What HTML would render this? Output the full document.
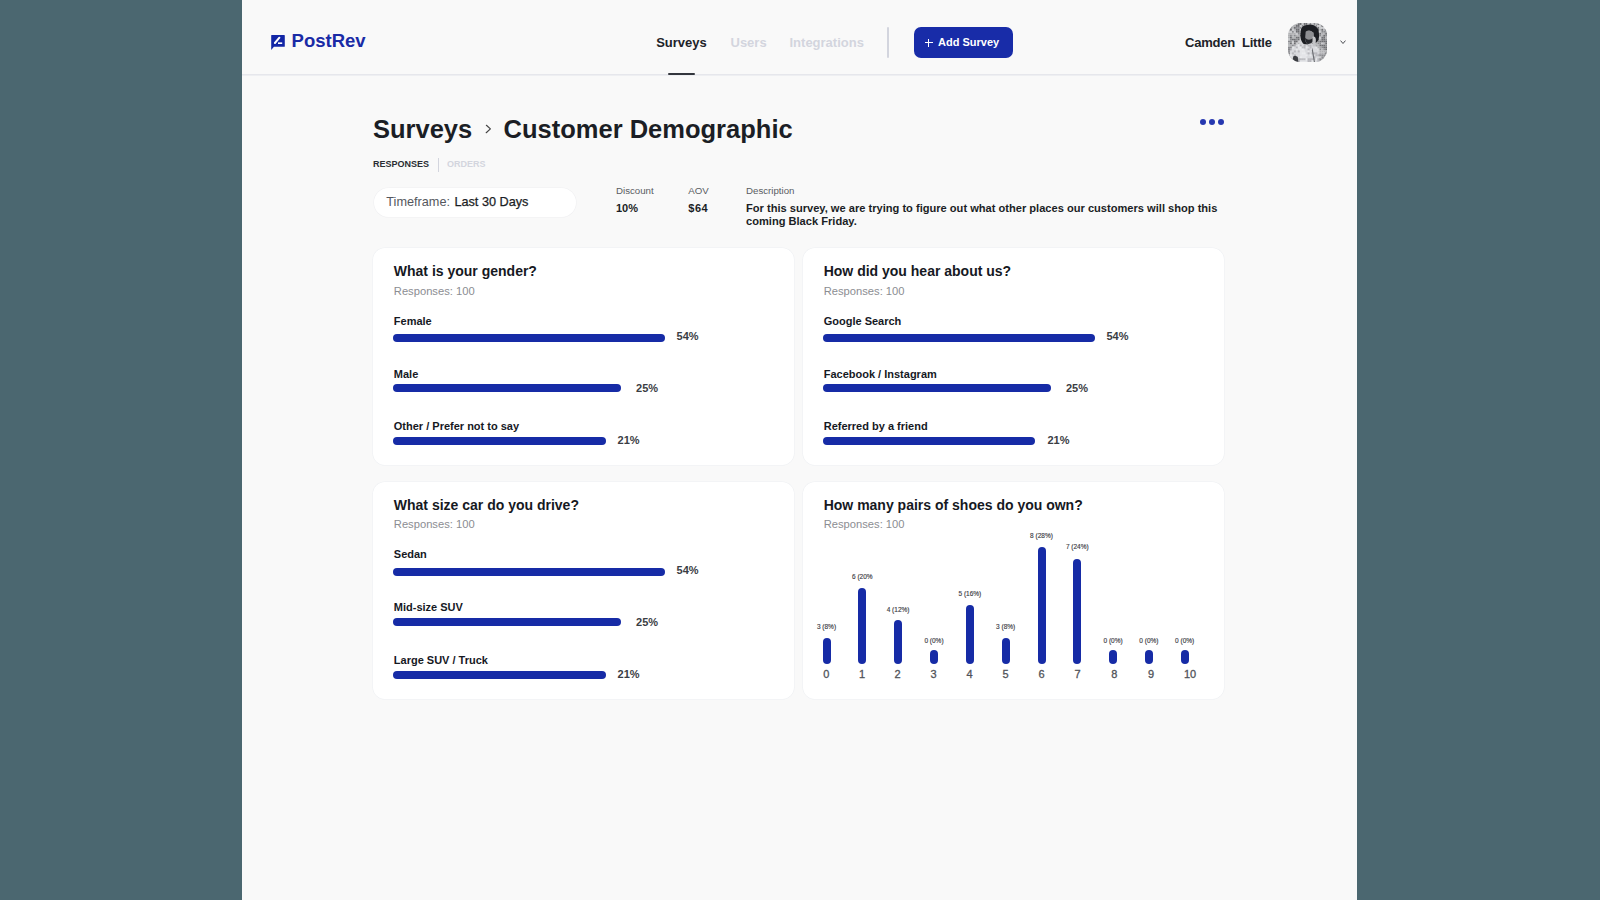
<!DOCTYPE html>
<html><head><meta charset="utf-8"><title>PostRev - Customer Demographic</title>
<style>
html,body{margin:0;padding:0;width:1600px;height:900px;overflow:hidden;background:#f9f9f9}
body{position:relative;font-family:"Liberation Sans",sans-serif}
.t{position:absolute;line-height:1;white-space:nowrap}
.c{text-align:center}
</style></head><body>
<div style="position:absolute;left:0.00px;top:0.00px;width:242.00px;height:900.00px;background:#4b6770"></div>
<div style="position:absolute;left:1357.00px;top:0.00px;width:243.00px;height:900.00px;background:#4b6770"></div>
<div style="position:absolute;left:242.00px;top:0.00px;width:1115.00px;height:900.00px;background:#f9f9f9"></div>
<div style="position:absolute;left:242.00px;top:74.00px;width:1115.00px;height:1.00px;background:#e6e7ec"></div>
<div style="position:absolute;left:242.00px;top:75.00px;width:1115.00px;height:1.00px;background:#eeeff2"></div>
<svg style="position:absolute;left:271.3px;top:34.6px" width="14" height="15.2" viewBox="0 0 14 15.2"><path d="M0.6 0 H13.2 Q13.8 0 13.8 0.6 V11.2 Q13.8 11.8 13.2 11.8 H2.9 L0.2 15 V0.6 Q0.2 0 0.6 0 Z" fill="#1226a6"/><path d="M3.9 8.0 L8.4 2.7" stroke="#fff" stroke-width="2.0" stroke-linecap="round"/><rect x="7.0" y="7.4" width="4.2" height="1.6" fill="#fff"/></svg>
<div class="t " style="left:291.60px;top:31.54px;font-size:18.5px;font-weight:700;color:#1a2ba6;">PostRev</div>
<div class="t " style="left:656.20px;top:36.29px;font-size:13px;font-weight:700;color:#202228;">Surveys</div>
<div style="position:absolute;left:668.00px;top:73.00px;width:27.00px;height:2.00px;background:#33363d;border-radius:1px"></div>
<div class="t " style="left:730.50px;top:36.29px;font-size:13px;font-weight:700;color:#d3d5de;">Users</div>
<div class="t " style="left:789.50px;top:36.29px;font-size:13px;font-weight:700;color:#d3d5de;">Integrations</div>
<div style="position:absolute;left:887.40px;top:27.30px;width:1.60px;height:30.40px;background:#d3d5de;border-radius:1px"></div>
<div style="position:absolute;left:914.00px;top:27.30px;width:99.40px;height:30.30px;background:#182ca8;border-radius:7px"></div>
<div style="position:absolute;left:924.90px;top:42.20px;width:8.00px;height:1.10px;background:#fff"></div>
<div style="position:absolute;left:928.35px;top:38.75px;width:1.10px;height:8.00px;background:#fff"></div>
<div class="t " style="left:938.00px;top:37.29px;font-size:11px;font-weight:700;color:#ffffff;">Add Survey</div>
<div class="t " style="left:1185.00px;top:36.09px;font-size:13px;font-weight:700;color:#202228;letter-spacing:-0.2px">Camden&nbsp; Little</div>
<svg style="position:absolute;left:1288px;top:23px" width="39.2" height="39.2" viewBox="0 0 40 40">
<defs><clipPath id="av"><rect width="40" height="40" rx="13"/></clipPath></defs>
<g clip-path="url(#av)">
<rect x="0" y="0" width="2" height="2" fill="#6d6e72"/><rect x="2" y="0" width="2" height="2" fill="#8a8b8f"/><rect x="4" y="0" width="2" height="2" fill="#8a8b8f"/><rect x="6" y="0" width="2" height="2" fill="#b0b1b4"/><rect x="8" y="0" width="2" height="2" fill="#b0b1b4"/><rect x="10" y="0" width="2" height="2" fill="#6d6e72"/><rect x="12" y="0" width="2" height="2" fill="#6d6e72"/><rect x="14" y="0" width="2" height="2" fill="#c9cacd"/><rect x="16" y="0" width="2" height="2" fill="#6d6e72"/><rect x="18" y="0" width="2" height="2" fill="#6d6e72"/><rect x="20" y="0" width="2" height="2" fill="#c9cacd"/><rect x="22" y="0" width="2" height="2" fill="#8a8b8f"/><rect x="24" y="0" width="2" height="2" fill="#c9cacd"/><rect x="26" y="0" width="2" height="2" fill="#8a8b8f"/><rect x="28" y="0" width="2" height="2" fill="#b0b1b4"/><rect x="30" y="0" width="2" height="2" fill="#6d6e72"/><rect x="32" y="0" width="2" height="2" fill="#b0b1b4"/><rect x="34" y="0" width="2" height="2" fill="#c9cacd"/><rect x="36" y="0" width="2" height="2" fill="#8a8b8f"/><rect x="38" y="0" width="2" height="2" fill="#b0b1b4"/><rect x="0" y="2" width="2" height="2" fill="#b0b1b4"/><rect x="2" y="2" width="2" height="2" fill="#6d6e72"/><rect x="4" y="2" width="2" height="2" fill="#b0b1b4"/><rect x="6" y="2" width="2" height="2" fill="#b0b1b4"/><rect x="8" y="2" width="2" height="2" fill="#6d6e72"/><rect x="10" y="2" width="2" height="2" fill="#6d6e72"/><rect x="12" y="2" width="2" height="2" fill="#c9cacd"/><rect x="14" y="2" width="2" height="2" fill="#8a8b8f"/><rect x="16" y="2" width="2" height="2" fill="#b0b1b4"/><rect x="18" y="2" width="2" height="2" fill="#c9cacd"/><rect x="20" y="2" width="2" height="2" fill="#b0b1b4"/><rect x="22" y="2" width="2" height="2" fill="#c9cacd"/><rect x="24" y="2" width="2" height="2" fill="#8a8b8f"/><rect x="26" y="2" width="2" height="2" fill="#c9cacd"/><rect x="28" y="2" width="2" height="2" fill="#8a8b8f"/><rect x="30" y="2" width="2" height="2" fill="#c9cacd"/><rect x="32" y="2" width="2" height="2" fill="#c9cacd"/><rect x="34" y="2" width="2" height="2" fill="#6d6e72"/><rect x="36" y="2" width="2" height="2" fill="#6d6e72"/><rect x="38" y="2" width="2" height="2" fill="#6d6e72"/><rect x="0" y="4" width="2" height="2" fill="#c9cacd"/><rect x="2" y="4" width="2" height="2" fill="#8a8b8f"/><rect x="4" y="4" width="2" height="2" fill="#b0b1b4"/><rect x="6" y="4" width="2" height="2" fill="#6d6e72"/><rect x="8" y="4" width="2" height="2" fill="#8a8b8f"/><rect x="10" y="4" width="2" height="2" fill="#8a8b8f"/><rect x="12" y="4" width="2" height="2" fill="#8a8b8f"/><rect x="14" y="4" width="2" height="2" fill="#b0b1b4"/><rect x="16" y="4" width="2" height="2" fill="#b0b1b4"/><rect x="18" y="4" width="2" height="2" fill="#c9cacd"/><rect x="20" y="4" width="2" height="2" fill="#b0b1b4"/><rect x="22" y="4" width="2" height="2" fill="#c9cacd"/><rect x="24" y="4" width="2" height="2" fill="#c9cacd"/><rect x="26" y="4" width="2" height="2" fill="#c9cacd"/><rect x="28" y="4" width="2" height="2" fill="#b0b1b4"/><rect x="30" y="4" width="2" height="2" fill="#6d6e72"/><rect x="32" y="4" width="2" height="2" fill="#c9cacd"/><rect x="34" y="4" width="2" height="2" fill="#c9cacd"/><rect x="36" y="4" width="2" height="2" fill="#c9cacd"/><rect x="38" y="4" width="2" height="2" fill="#b0b1b4"/><rect x="0" y="6" width="2" height="2" fill="#b0b1b4"/><rect x="2" y="6" width="2" height="2" fill="#6d6e72"/><rect x="4" y="6" width="2" height="2" fill="#c9cacd"/><rect x="6" y="6" width="2" height="2" fill="#b0b1b4"/><rect x="8" y="6" width="2" height="2" fill="#6d6e72"/><rect x="10" y="6" width="2" height="2" fill="#6d6e72"/><rect x="12" y="6" width="2" height="2" fill="#c9cacd"/><rect x="14" y="6" width="2" height="2" fill="#c9cacd"/><rect x="16" y="6" width="2" height="2" fill="#6d6e72"/><rect x="18" y="6" width="2" height="2" fill="#c9cacd"/><rect x="20" y="6" width="2" height="2" fill="#8a8b8f"/><rect x="22" y="6" width="2" height="2" fill="#6d6e72"/><rect x="24" y="6" width="2" height="2" fill="#6d6e72"/><rect x="26" y="6" width="2" height="2" fill="#b0b1b4"/><rect x="28" y="6" width="2" height="2" fill="#c9cacd"/><rect x="30" y="6" width="2" height="2" fill="#6d6e72"/><rect x="32" y="6" width="2" height="2" fill="#b0b1b4"/><rect x="34" y="6" width="2" height="2" fill="#6d6e72"/><rect x="36" y="6" width="2" height="2" fill="#b0b1b4"/><rect x="38" y="6" width="2" height="2" fill="#6d6e72"/><rect x="0" y="8" width="2" height="2" fill="#c9cacd"/><rect x="2" y="8" width="2" height="2" fill="#c9cacd"/><rect x="4" y="8" width="2" height="2" fill="#8a8b8f"/><rect x="6" y="8" width="2" height="2" fill="#c9cacd"/><rect x="8" y="8" width="2" height="2" fill="#6d6e72"/><rect x="10" y="8" width="2" height="2" fill="#6d6e72"/><rect x="12" y="8" width="2" height="2" fill="#b0b1b4"/><rect x="14" y="8" width="2" height="2" fill="#6d6e72"/><rect x="16" y="8" width="2" height="2" fill="#6d6e72"/><rect x="18" y="8" width="2" height="2" fill="#8a8b8f"/><rect x="20" y="8" width="2" height="2" fill="#b0b1b4"/><rect x="22" y="8" width="2" height="2" fill="#6d6e72"/><rect x="24" y="8" width="2" height="2" fill="#6d6e72"/><rect x="26" y="8" width="2" height="2" fill="#c9cacd"/><rect x="28" y="8" width="2" height="2" fill="#6d6e72"/><rect x="30" y="8" width="2" height="2" fill="#c9cacd"/><rect x="32" y="8" width="2" height="2" fill="#c9cacd"/><rect x="34" y="8" width="2" height="2" fill="#8a8b8f"/><rect x="36" y="8" width="2" height="2" fill="#8a8b8f"/><rect x="38" y="8" width="2" height="2" fill="#8a8b8f"/><rect x="0" y="10" width="2" height="2" fill="#b0b1b4"/><rect x="2" y="10" width="2" height="2" fill="#b0b1b4"/><rect x="4" y="10" width="2" height="2" fill="#b0b1b4"/><rect x="6" y="10" width="2" height="2" fill="#b0b1b4"/><rect x="8" y="10" width="2" height="2" fill="#c9cacd"/><rect x="10" y="10" width="2" height="2" fill="#8a8b8f"/><rect x="12" y="10" width="2" height="2" fill="#8a8b8f"/><rect x="14" y="10" width="2" height="2" fill="#b0b1b4"/><rect x="16" y="10" width="2" height="2" fill="#6d6e72"/><rect x="18" y="10" width="2" height="2" fill="#6d6e72"/><rect x="20" y="10" width="2" height="2" fill="#c9cacd"/><rect x="22" y="10" width="2" height="2" fill="#8a8b8f"/><rect x="24" y="10" width="2" height="2" fill="#8a8b8f"/><rect x="26" y="10" width="2" height="2" fill="#6d6e72"/><rect x="28" y="10" width="2" height="2" fill="#8a8b8f"/><rect x="30" y="10" width="2" height="2" fill="#b0b1b4"/><rect x="32" y="10" width="2" height="2" fill="#6d6e72"/><rect x="34" y="10" width="2" height="2" fill="#b0b1b4"/><rect x="36" y="10" width="2" height="2" fill="#b0b1b4"/><rect x="38" y="10" width="2" height="2" fill="#6d6e72"/><rect x="0" y="12" width="2" height="2" fill="#b0b1b4"/><rect x="2" y="12" width="2" height="2" fill="#8a8b8f"/><rect x="4" y="12" width="2" height="2" fill="#b0b1b4"/><rect x="6" y="12" width="2" height="2" fill="#8a8b8f"/><rect x="8" y="12" width="2" height="2" fill="#b0b1b4"/><rect x="10" y="12" width="2" height="2" fill="#b0b1b4"/><rect x="12" y="12" width="2" height="2" fill="#6d6e72"/><rect x="14" y="12" width="2" height="2" fill="#6d6e72"/><rect x="16" y="12" width="2" height="2" fill="#b0b1b4"/><rect x="18" y="12" width="2" height="2" fill="#c9cacd"/><rect x="20" y="12" width="2" height="2" fill="#6d6e72"/><rect x="22" y="12" width="2" height="2" fill="#8a8b8f"/><rect x="24" y="12" width="2" height="2" fill="#b0b1b4"/><rect x="26" y="12" width="2" height="2" fill="#6d6e72"/><rect x="28" y="12" width="2" height="2" fill="#8a8b8f"/><rect x="30" y="12" width="2" height="2" fill="#6d6e72"/><rect x="32" y="12" width="2" height="2" fill="#8a8b8f"/><rect x="34" y="12" width="2" height="2" fill="#b0b1b4"/><rect x="36" y="12" width="2" height="2" fill="#6d6e72"/><rect x="38" y="12" width="2" height="2" fill="#8a8b8f"/><rect x="0" y="14" width="2" height="2" fill="#b0b1b4"/><rect x="2" y="14" width="2" height="2" fill="#6d6e72"/><rect x="4" y="14" width="2" height="2" fill="#b0b1b4"/><rect x="6" y="14" width="2" height="2" fill="#b0b1b4"/><rect x="8" y="14" width="2" height="2" fill="#6d6e72"/><rect x="10" y="14" width="2" height="2" fill="#6d6e72"/><rect x="12" y="14" width="2" height="2" fill="#c9cacd"/><rect x="14" y="14" width="2" height="2" fill="#6d6e72"/><rect x="16" y="14" width="2" height="2" fill="#6d6e72"/><rect x="18" y="14" width="2" height="2" fill="#8a8b8f"/><rect x="20" y="14" width="2" height="2" fill="#b0b1b4"/><rect x="22" y="14" width="2" height="2" fill="#6d6e72"/><rect x="24" y="14" width="2" height="2" fill="#6d6e72"/><rect x="26" y="14" width="2" height="2" fill="#6d6e72"/><rect x="28" y="14" width="2" height="2" fill="#c9cacd"/><rect x="30" y="14" width="2" height="2" fill="#8a8b8f"/><rect x="32" y="14" width="2" height="2" fill="#c9cacd"/><rect x="34" y="14" width="2" height="2" fill="#6d6e72"/><rect x="36" y="14" width="2" height="2" fill="#6d6e72"/><rect x="38" y="14" width="2" height="2" fill="#b0b1b4"/><rect x="0" y="16" width="2" height="2" fill="#c9cacd"/><rect x="2" y="16" width="2" height="2" fill="#8a8b8f"/><rect x="4" y="16" width="2" height="2" fill="#6d6e72"/><rect x="6" y="16" width="2" height="2" fill="#6d6e72"/><rect x="8" y="16" width="2" height="2" fill="#8a8b8f"/><rect x="10" y="16" width="2" height="2" fill="#6d6e72"/><rect x="12" y="16" width="2" height="2" fill="#c9cacd"/><rect x="14" y="16" width="2" height="2" fill="#c9cacd"/><rect x="16" y="16" width="2" height="2" fill="#6d6e72"/><rect x="18" y="16" width="2" height="2" fill="#6d6e72"/><rect x="20" y="16" width="2" height="2" fill="#c9cacd"/><rect x="22" y="16" width="2" height="2" fill="#b0b1b4"/><rect x="24" y="16" width="2" height="2" fill="#c9cacd"/><rect x="26" y="16" width="2" height="2" fill="#6d6e72"/><rect x="28" y="16" width="2" height="2" fill="#6d6e72"/><rect x="30" y="16" width="2" height="2" fill="#6d6e72"/><rect x="32" y="16" width="2" height="2" fill="#b0b1b4"/><rect x="34" y="16" width="2" height="2" fill="#6d6e72"/><rect x="36" y="16" width="2" height="2" fill="#6d6e72"/><rect x="38" y="16" width="2" height="2" fill="#8a8b8f"/><rect x="0" y="18" width="2" height="2" fill="#8a8b8f"/><rect x="2" y="18" width="2" height="2" fill="#8a8b8f"/><rect x="4" y="18" width="2" height="2" fill="#c9cacd"/><rect x="6" y="18" width="2" height="2" fill="#6d6e72"/><rect x="8" y="18" width="2" height="2" fill="#6d6e72"/><rect x="10" y="18" width="2" height="2" fill="#c9cacd"/><rect x="12" y="18" width="2" height="2" fill="#c9cacd"/><rect x="14" y="18" width="2" height="2" fill="#c9cacd"/><rect x="16" y="18" width="2" height="2" fill="#8a8b8f"/><rect x="18" y="18" width="2" height="2" fill="#c9cacd"/><rect x="20" y="18" width="2" height="2" fill="#c9cacd"/><rect x="22" y="18" width="2" height="2" fill="#6d6e72"/><rect x="24" y="18" width="2" height="2" fill="#b0b1b4"/><rect x="26" y="18" width="2" height="2" fill="#c9cacd"/><rect x="28" y="18" width="2" height="2" fill="#b0b1b4"/><rect x="30" y="18" width="2" height="2" fill="#8a8b8f"/><rect x="32" y="18" width="2" height="2" fill="#6d6e72"/><rect x="34" y="18" width="2" height="2" fill="#6d6e72"/><rect x="36" y="18" width="2" height="2" fill="#6d6e72"/><rect x="38" y="18" width="2" height="2" fill="#6d6e72"/><rect x="0" y="20" width="2" height="2" fill="#b0b1b4"/><rect x="2" y="20" width="2" height="2" fill="#6d6e72"/><rect x="4" y="20" width="2" height="2" fill="#c9cacd"/><rect x="6" y="20" width="2" height="2" fill="#6d6e72"/><rect x="8" y="20" width="2" height="2" fill="#c9cacd"/><rect x="10" y="20" width="2" height="2" fill="#b0b1b4"/><rect x="12" y="20" width="2" height="2" fill="#c9cacd"/><rect x="14" y="20" width="2" height="2" fill="#c9cacd"/><rect x="16" y="20" width="2" height="2" fill="#c9cacd"/><rect x="18" y="20" width="2" height="2" fill="#b0b1b4"/><rect x="20" y="20" width="2" height="2" fill="#6d6e72"/><rect x="22" y="20" width="2" height="2" fill="#b0b1b4"/><rect x="24" y="20" width="2" height="2" fill="#6d6e72"/><rect x="26" y="20" width="2" height="2" fill="#6d6e72"/><rect x="28" y="20" width="2" height="2" fill="#b0b1b4"/><rect x="30" y="20" width="2" height="2" fill="#8a8b8f"/><rect x="32" y="20" width="2" height="2" fill="#8a8b8f"/><rect x="34" y="20" width="2" height="2" fill="#c9cacd"/><rect x="36" y="20" width="2" height="2" fill="#b0b1b4"/><rect x="38" y="20" width="2" height="2" fill="#6d6e72"/><rect x="0" y="22" width="2" height="2" fill="#6d6e72"/><rect x="2" y="22" width="2" height="2" fill="#c9cacd"/><rect x="4" y="22" width="2" height="2" fill="#8a8b8f"/><rect x="6" y="22" width="2" height="2" fill="#b0b1b4"/><rect x="8" y="22" width="2" height="2" fill="#8a8b8f"/><rect x="10" y="22" width="2" height="2" fill="#6d6e72"/><rect x="12" y="22" width="2" height="2" fill="#8a8b8f"/><rect x="14" y="22" width="2" height="2" fill="#c9cacd"/><rect x="16" y="22" width="2" height="2" fill="#6d6e72"/><rect x="18" y="22" width="2" height="2" fill="#b0b1b4"/><rect x="20" y="22" width="2" height="2" fill="#c9cacd"/><rect x="22" y="22" width="2" height="2" fill="#c9cacd"/><rect x="24" y="22" width="2" height="2" fill="#c9cacd"/><rect x="26" y="22" width="2" height="2" fill="#6d6e72"/><rect x="28" y="22" width="2" height="2" fill="#b0b1b4"/><rect x="30" y="22" width="2" height="2" fill="#c9cacd"/><rect x="32" y="22" width="2" height="2" fill="#6d6e72"/><rect x="34" y="22" width="2" height="2" fill="#6d6e72"/><rect x="36" y="22" width="2" height="2" fill="#6d6e72"/><rect x="38" y="22" width="2" height="2" fill="#8a8b8f"/><rect x="0" y="24" width="2" height="2" fill="#8a8b8f"/><rect x="2" y="24" width="2" height="2" fill="#8a8b8f"/><rect x="4" y="24" width="2" height="2" fill="#b0b1b4"/><rect x="6" y="24" width="2" height="2" fill="#6d6e72"/><rect x="8" y="24" width="2" height="2" fill="#6d6e72"/><rect x="10" y="24" width="2" height="2" fill="#6d6e72"/><rect x="12" y="24" width="2" height="2" fill="#6d6e72"/><rect x="14" y="24" width="2" height="2" fill="#6d6e72"/><rect x="16" y="24" width="2" height="2" fill="#c9cacd"/><rect x="18" y="24" width="2" height="2" fill="#c9cacd"/><rect x="20" y="24" width="2" height="2" fill="#6d6e72"/><rect x="22" y="24" width="2" height="2" fill="#8a8b8f"/><rect x="24" y="24" width="2" height="2" fill="#6d6e72"/><rect x="26" y="24" width="2" height="2" fill="#6d6e72"/><rect x="28" y="24" width="2" height="2" fill="#8a8b8f"/><rect x="30" y="24" width="2" height="2" fill="#b0b1b4"/><rect x="32" y="24" width="2" height="2" fill="#b0b1b4"/><rect x="34" y="24" width="2" height="2" fill="#8a8b8f"/><rect x="36" y="24" width="2" height="2" fill="#6d6e72"/><rect x="38" y="24" width="2" height="2" fill="#6d6e72"/><rect x="0" y="26" width="2" height="2" fill="#6d6e72"/><rect x="2" y="26" width="2" height="2" fill="#b0b1b4"/><rect x="4" y="26" width="2" height="2" fill="#b0b1b4"/><rect x="6" y="26" width="2" height="2" fill="#8a8b8f"/><rect x="8" y="26" width="2" height="2" fill="#6d6e72"/><rect x="10" y="26" width="2" height="2" fill="#6d6e72"/><rect x="12" y="26" width="2" height="2" fill="#8a8b8f"/><rect x="14" y="26" width="2" height="2" fill="#b0b1b4"/><rect x="16" y="26" width="2" height="2" fill="#b0b1b4"/><rect x="18" y="26" width="2" height="2" fill="#8a8b8f"/><rect x="20" y="26" width="2" height="2" fill="#c9cacd"/><rect x="22" y="26" width="2" height="2" fill="#b0b1b4"/><rect x="24" y="26" width="2" height="2" fill="#8a8b8f"/><rect x="26" y="26" width="2" height="2" fill="#8a8b8f"/><rect x="28" y="26" width="2" height="2" fill="#8a8b8f"/><rect x="30" y="26" width="2" height="2" fill="#b0b1b4"/><rect x="32" y="26" width="2" height="2" fill="#8a8b8f"/><rect x="34" y="26" width="2" height="2" fill="#b0b1b4"/><rect x="36" y="26" width="2" height="2" fill="#8a8b8f"/><rect x="38" y="26" width="2" height="2" fill="#6d6e72"/><rect x="0" y="28" width="2" height="2" fill="#8a8b8f"/><rect x="2" y="28" width="2" height="2" fill="#b0b1b4"/><rect x="4" y="28" width="2" height="2" fill="#6d6e72"/><rect x="6" y="28" width="2" height="2" fill="#8a8b8f"/><rect x="8" y="28" width="2" height="2" fill="#8a8b8f"/><rect x="10" y="28" width="2" height="2" fill="#c9cacd"/><rect x="12" y="28" width="2" height="2" fill="#c9cacd"/><rect x="14" y="28" width="2" height="2" fill="#8a8b8f"/><rect x="16" y="28" width="2" height="2" fill="#c9cacd"/><rect x="18" y="28" width="2" height="2" fill="#b0b1b4"/><rect x="20" y="28" width="2" height="2" fill="#6d6e72"/><rect x="22" y="28" width="2" height="2" fill="#8a8b8f"/><rect x="24" y="28" width="2" height="2" fill="#6d6e72"/><rect x="26" y="28" width="2" height="2" fill="#c9cacd"/><rect x="28" y="28" width="2" height="2" fill="#b0b1b4"/><rect x="30" y="28" width="2" height="2" fill="#c9cacd"/><rect x="32" y="28" width="2" height="2" fill="#b0b1b4"/><rect x="34" y="28" width="2" height="2" fill="#b0b1b4"/><rect x="36" y="28" width="2" height="2" fill="#b0b1b4"/><rect x="38" y="28" width="2" height="2" fill="#b0b1b4"/><rect x="0" y="30" width="2" height="2" fill="#6d6e72"/><rect x="2" y="30" width="2" height="2" fill="#b0b1b4"/><rect x="4" y="30" width="2" height="2" fill="#6d6e72"/><rect x="6" y="30" width="2" height="2" fill="#6d6e72"/><rect x="8" y="30" width="2" height="2" fill="#b0b1b4"/><rect x="10" y="30" width="2" height="2" fill="#6d6e72"/><rect x="12" y="30" width="2" height="2" fill="#6d6e72"/><rect x="14" y="30" width="2" height="2" fill="#6d6e72"/><rect x="16" y="30" width="2" height="2" fill="#c9cacd"/><rect x="18" y="30" width="2" height="2" fill="#6d6e72"/><rect x="20" y="30" width="2" height="2" fill="#6d6e72"/><rect x="22" y="30" width="2" height="2" fill="#c9cacd"/><rect x="24" y="30" width="2" height="2" fill="#6d6e72"/><rect x="26" y="30" width="2" height="2" fill="#c9cacd"/><rect x="28" y="30" width="2" height="2" fill="#b0b1b4"/><rect x="30" y="30" width="2" height="2" fill="#c9cacd"/><rect x="32" y="30" width="2" height="2" fill="#c9cacd"/><rect x="34" y="30" width="2" height="2" fill="#b0b1b4"/><rect x="36" y="30" width="2" height="2" fill="#b0b1b4"/><rect x="38" y="30" width="2" height="2" fill="#6d6e72"/><rect x="0" y="32" width="2" height="2" fill="#b0b1b4"/><rect x="2" y="32" width="2" height="2" fill="#8a8b8f"/><rect x="4" y="32" width="2" height="2" fill="#b0b1b4"/><rect x="6" y="32" width="2" height="2" fill="#6d6e72"/><rect x="8" y="32" width="2" height="2" fill="#b0b1b4"/><rect x="10" y="32" width="2" height="2" fill="#c9cacd"/><rect x="12" y="32" width="2" height="2" fill="#6d6e72"/><rect x="14" y="32" width="2" height="2" fill="#6d6e72"/><rect x="16" y="32" width="2" height="2" fill="#b0b1b4"/><rect x="18" y="32" width="2" height="2" fill="#c9cacd"/><rect x="20" y="32" width="2" height="2" fill="#6d6e72"/><rect x="22" y="32" width="2" height="2" fill="#6d6e72"/><rect x="24" y="32" width="2" height="2" fill="#6d6e72"/><rect x="26" y="32" width="2" height="2" fill="#b0b1b4"/><rect x="28" y="32" width="2" height="2" fill="#b0b1b4"/><rect x="30" y="32" width="2" height="2" fill="#8a8b8f"/><rect x="32" y="32" width="2" height="2" fill="#8a8b8f"/><rect x="34" y="32" width="2" height="2" fill="#8a8b8f"/><rect x="36" y="32" width="2" height="2" fill="#8a8b8f"/><rect x="38" y="32" width="2" height="2" fill="#8a8b8f"/><rect x="0" y="34" width="2" height="2" fill="#6d6e72"/><rect x="2" y="34" width="2" height="2" fill="#8a8b8f"/><rect x="4" y="34" width="2" height="2" fill="#c9cacd"/><rect x="6" y="34" width="2" height="2" fill="#8a8b8f"/><rect x="8" y="34" width="2" height="2" fill="#b0b1b4"/><rect x="10" y="34" width="2" height="2" fill="#6d6e72"/><rect x="12" y="34" width="2" height="2" fill="#b0b1b4"/><rect x="14" y="34" width="2" height="2" fill="#b0b1b4"/><rect x="16" y="34" width="2" height="2" fill="#b0b1b4"/><rect x="18" y="34" width="2" height="2" fill="#8a8b8f"/><rect x="20" y="34" width="2" height="2" fill="#8a8b8f"/><rect x="22" y="34" width="2" height="2" fill="#b0b1b4"/><rect x="24" y="34" width="2" height="2" fill="#c9cacd"/><rect x="26" y="34" width="2" height="2" fill="#6d6e72"/><rect x="28" y="34" width="2" height="2" fill="#6d6e72"/><rect x="30" y="34" width="2" height="2" fill="#b0b1b4"/><rect x="32" y="34" width="2" height="2" fill="#c9cacd"/><rect x="34" y="34" width="2" height="2" fill="#8a8b8f"/><rect x="36" y="34" width="2" height="2" fill="#8a8b8f"/><rect x="38" y="34" width="2" height="2" fill="#b0b1b4"/><rect x="0" y="36" width="2" height="2" fill="#6d6e72"/><rect x="2" y="36" width="2" height="2" fill="#6d6e72"/><rect x="4" y="36" width="2" height="2" fill="#6d6e72"/><rect x="6" y="36" width="2" height="2" fill="#b0b1b4"/><rect x="8" y="36" width="2" height="2" fill="#6d6e72"/><rect x="10" y="36" width="2" height="2" fill="#6d6e72"/><rect x="12" y="36" width="2" height="2" fill="#b0b1b4"/><rect x="14" y="36" width="2" height="2" fill="#c9cacd"/><rect x="16" y="36" width="2" height="2" fill="#6d6e72"/><rect x="18" y="36" width="2" height="2" fill="#b0b1b4"/><rect x="20" y="36" width="2" height="2" fill="#8a8b8f"/><rect x="22" y="36" width="2" height="2" fill="#c9cacd"/><rect x="24" y="36" width="2" height="2" fill="#b0b1b4"/><rect x="26" y="36" width="2" height="2" fill="#6d6e72"/><rect x="28" y="36" width="2" height="2" fill="#6d6e72"/><rect x="30" y="36" width="2" height="2" fill="#6d6e72"/><rect x="32" y="36" width="2" height="2" fill="#8a8b8f"/><rect x="34" y="36" width="2" height="2" fill="#8a8b8f"/><rect x="36" y="36" width="2" height="2" fill="#6d6e72"/><rect x="38" y="36" width="2" height="2" fill="#8a8b8f"/><rect x="0" y="38" width="2" height="2" fill="#6d6e72"/><rect x="2" y="38" width="2" height="2" fill="#b0b1b4"/><rect x="4" y="38" width="2" height="2" fill="#6d6e72"/><rect x="6" y="38" width="2" height="2" fill="#c9cacd"/><rect x="8" y="38" width="2" height="2" fill="#8a8b8f"/><rect x="10" y="38" width="2" height="2" fill="#b0b1b4"/><rect x="12" y="38" width="2" height="2" fill="#8a8b8f"/><rect x="14" y="38" width="2" height="2" fill="#c9cacd"/><rect x="16" y="38" width="2" height="2" fill="#c9cacd"/><rect x="18" y="38" width="2" height="2" fill="#b0b1b4"/><rect x="20" y="38" width="2" height="2" fill="#8a8b8f"/><rect x="22" y="38" width="2" height="2" fill="#b0b1b4"/><rect x="24" y="38" width="2" height="2" fill="#c9cacd"/><rect x="26" y="38" width="2" height="2" fill="#8a8b8f"/><rect x="28" y="38" width="2" height="2" fill="#b0b1b4"/><rect x="30" y="38" width="2" height="2" fill="#c9cacd"/><rect x="32" y="38" width="2" height="2" fill="#8a8b8f"/><rect x="34" y="38" width="2" height="2" fill="#6d6e72"/><rect x="36" y="38" width="2" height="2" fill="#6d6e72"/><rect x="38" y="38" width="2" height="2" fill="#b0b1b4"/>
<path d="M1 40 L2 29 Q5 22 13 21 L19 22 L24 21 Q29 22 31 28 L32 40 Z" fill="#d9dade"/>
<path d="M9 24 Q14 30 12 40 L20 40 Q18 30 16 24 Z" fill="#e4e5e8"/>
<rect x="0" y="22" width="2" height="2" fill="#f0f1f4" opacity="0.6"/><rect x="2" y="22" width="2" height="2" fill="#9c9da2" opacity="0.55"/><rect x="6" y="22" width="2" height="2" fill="#9c9da2" opacity="0.55"/><rect x="10" y="22" width="2" height="2" fill="#f0f1f4" opacity="0.6"/><rect x="12" y="22" width="2" height="2" fill="#9c9da2" opacity="0.55"/><rect x="16" y="22" width="2" height="2" fill="#9c9da2" opacity="0.55"/><rect x="20" y="22" width="2" height="2" fill="#9c9da2" opacity="0.55"/><rect x="22" y="22" width="2" height="2" fill="#9c9da2" opacity="0.55"/><rect x="28" y="22" width="2" height="2" fill="#9c9da2" opacity="0.55"/><rect x="30" y="22" width="2" height="2" fill="#9c9da2" opacity="0.55"/><rect x="4" y="24" width="2" height="2" fill="#f0f1f4" opacity="0.6"/><rect x="8" y="24" width="2" height="2" fill="#9c9da2" opacity="0.55"/><rect x="12" y="24" width="2" height="2" fill="#f0f1f4" opacity="0.6"/><rect x="14" y="24" width="2" height="2" fill="#9c9da2" opacity="0.55"/><rect x="16" y="24" width="2" height="2" fill="#9c9da2" opacity="0.55"/><rect x="18" y="24" width="2" height="2" fill="#f0f1f4" opacity="0.6"/><rect x="22" y="24" width="2" height="2" fill="#9c9da2" opacity="0.55"/><rect x="28" y="24" width="2" height="2" fill="#f0f1f4" opacity="0.6"/><rect x="32" y="24" width="2" height="2" fill="#9c9da2" opacity="0.55"/><rect x="0" y="26" width="2" height="2" fill="#9c9da2" opacity="0.55"/><rect x="2" y="26" width="2" height="2" fill="#9c9da2" opacity="0.55"/><rect x="8" y="26" width="2" height="2" fill="#f0f1f4" opacity="0.6"/><rect x="14" y="26" width="2" height="2" fill="#f0f1f4" opacity="0.6"/><rect x="20" y="26" width="2" height="2" fill="#9c9da2" opacity="0.55"/><rect x="30" y="26" width="2" height="2" fill="#f0f1f4" opacity="0.6"/><rect x="0" y="28" width="2" height="2" fill="#9c9da2" opacity="0.55"/><rect x="6" y="28" width="2" height="2" fill="#9c9da2" opacity="0.55"/><rect x="10" y="28" width="2" height="2" fill="#9c9da2" opacity="0.55"/><rect x="20" y="28" width="2" height="2" fill="#f0f1f4" opacity="0.6"/><rect x="4" y="30" width="2" height="2" fill="#9c9da2" opacity="0.55"/><rect x="14" y="30" width="2" height="2" fill="#f0f1f4" opacity="0.6"/><rect x="16" y="30" width="2" height="2" fill="#f0f1f4" opacity="0.6"/><rect x="20" y="30" width="2" height="2" fill="#9c9da2" opacity="0.55"/><rect x="24" y="30" width="2" height="2" fill="#9c9da2" opacity="0.55"/><rect x="26" y="30" width="2" height="2" fill="#9c9da2" opacity="0.55"/><rect x="28" y="30" width="2" height="2" fill="#9c9da2" opacity="0.55"/><rect x="32" y="30" width="2" height="2" fill="#9c9da2" opacity="0.55"/><rect x="0" y="32" width="2" height="2" fill="#9c9da2" opacity="0.55"/><rect x="2" y="32" width="2" height="2" fill="#f0f1f4" opacity="0.6"/><rect x="6" y="32" width="2" height="2" fill="#9c9da2" opacity="0.55"/><rect x="18" y="32" width="2" height="2" fill="#f0f1f4" opacity="0.6"/><rect x="22" y="32" width="2" height="2" fill="#f0f1f4" opacity="0.6"/><rect x="28" y="32" width="2" height="2" fill="#9c9da2" opacity="0.55"/><rect x="30" y="32" width="2" height="2" fill="#9c9da2" opacity="0.55"/><rect x="32" y="32" width="2" height="2" fill="#9c9da2" opacity="0.55"/><rect x="0" y="34" width="2" height="2" fill="#9c9da2" opacity="0.55"/><rect x="6" y="34" width="2" height="2" fill="#f0f1f4" opacity="0.6"/><rect x="8" y="34" width="2" height="2" fill="#9c9da2" opacity="0.55"/><rect x="12" y="34" width="2" height="2" fill="#f0f1f4" opacity="0.6"/><rect x="26" y="34" width="2" height="2" fill="#9c9da2" opacity="0.55"/><rect x="2" y="36" width="2" height="2" fill="#f0f1f4" opacity="0.6"/><rect x="4" y="36" width="2" height="2" fill="#f0f1f4" opacity="0.6"/><rect x="6" y="36" width="2" height="2" fill="#9c9da2" opacity="0.55"/><rect x="10" y="36" width="2" height="2" fill="#9c9da2" opacity="0.55"/><rect x="12" y="36" width="2" height="2" fill="#9c9da2" opacity="0.55"/><rect x="14" y="36" width="2" height="2" fill="#9c9da2" opacity="0.55"/><rect x="16" y="36" width="2" height="2" fill="#9c9da2" opacity="0.55"/><rect x="18" y="36" width="2" height="2" fill="#f0f1f4" opacity="0.6"/><rect x="20" y="36" width="2" height="2" fill="#9c9da2" opacity="0.55"/><rect x="22" y="36" width="2" height="2" fill="#9c9da2" opacity="0.55"/><rect x="24" y="36" width="2" height="2" fill="#9c9da2" opacity="0.55"/><rect x="26" y="36" width="2" height="2" fill="#9c9da2" opacity="0.55"/><rect x="28" y="36" width="2" height="2" fill="#f0f1f4" opacity="0.6"/><rect x="30" y="36" width="2" height="2" fill="#9c9da2" opacity="0.55"/><rect x="2" y="38" width="2" height="2" fill="#9c9da2" opacity="0.55"/><rect x="4" y="38" width="2" height="2" fill="#f0f1f4" opacity="0.6"/><rect x="6" y="38" width="2" height="2" fill="#f0f1f4" opacity="0.6"/><rect x="8" y="38" width="2" height="2" fill="#f0f1f4" opacity="0.6"/><rect x="10" y="38" width="2" height="2" fill="#9c9da2" opacity="0.55"/><rect x="20" y="38" width="2" height="2" fill="#9c9da2" opacity="0.55"/><rect x="22" y="38" width="2" height="2" fill="#9c9da2" opacity="0.55"/><rect x="24" y="38" width="2" height="2" fill="#f0f1f4" opacity="0.6"/><rect x="26" y="38" width="2" height="2" fill="#f0f1f4" opacity="0.6"/><rect x="30" y="38" width="2" height="2" fill="#9c9da2" opacity="0.55"/><rect x="32" y="38" width="2" height="2" fill="#9c9da2" opacity="0.55"/><path d="M4 40 L5.5 34 Q8 32.5 10 35 L10.5 40 Z" fill="#3b3d42"/>
<path d="M25 25 L27.6 40 L26.4 40 L24.4 28 Z" fill="#6a6c71"/>
<path d="M13 8 Q13.5 2.5 19 2 Q23 0.8 27 2.5 Q31.5 5 31.5 10 Q32.5 15 30 19 Q28.5 21 26.5 20 L26 10 Q22 6.5 18.5 9 L18 17 Q18.5 21 21 22 L16 21.5 Q12.5 18 12.8 13 Z" fill="#1c1e23"/>
<path d="M18 9 Q22 6 26 10 L26.5 16 Q25 21 21 21.5 Q18 21 17.5 17 Z" fill="#8e8f93"/>
<path d="M17.5 15 Q21 19 26 15 L26 18 Q23 22 20 21.5 Q18 20 17.5 17 Z" fill="#26282d"/>
<path d="M25 14 Q28 13 28.5 17 L28 24 L25 24 Z" fill="#c3c4c7"/>
</g></svg>
<svg style="position:absolute;left:1339.6px;top:40.2px" width="6" height="5" viewBox="0 0 6 5"><path d="M0.8 0.9 L3 3.5 L5.2 0.9" stroke="#4a4c52" stroke-width="1.0" fill="none" stroke-linecap="round" stroke-linejoin="round"/></svg>
<div class="t " style="left:373.00px;top:116.51px;font-size:25.5px;font-weight:700;color:#1b1e25;">Surveys</div>
<svg style="position:absolute;left:484.6px;top:123.7px" width="8" height="10" viewBox="0 0 8 10"><path d="M1.4 1.3 L5.4 4.9 L1.2 8.7" stroke="#444" stroke-width="1.2" fill="none" stroke-linecap="round" stroke-linejoin="round"/></svg>
<div class="t " style="left:503.60px;top:116.51px;font-size:25.5px;font-weight:700;color:#1b1e25;">Customer Demographic</div>
<div style="position:absolute;left:1200.00px;top:119.00px;width:6.00px;height:6.00px;background:#2638b0;border-radius:50%"></div>
<div style="position:absolute;left:1209.00px;top:119.00px;width:6.00px;height:6.00px;background:#2638b0;border-radius:50%"></div>
<div style="position:absolute;left:1218.00px;top:119.00px;width:6.00px;height:6.00px;background:#2638b0;border-radius:50%"></div>
<div class="t " style="left:373.00px;top:159.88px;font-size:9px;font-weight:700;color:#2a2d33;">RESPONSES</div>
<div style="position:absolute;left:438.00px;top:157.50px;width:1.20px;height:14.50px;background:#d3d5de"></div>
<div class="t " style="left:447.00px;top:159.88px;font-size:9px;font-weight:700;color:#d3d5de;">ORDERS</div>
<div style="position:absolute;left:373.50px;top:187.50px;width:202.00px;height:29.00px;background:#fff;border-radius:15px;box-shadow:0 0 0 0.6px #f0f0f2"></div>
<div class="t " style="left:386.30px;top:195.75px;font-size:12.7px;font-weight:400;color:#55585e;">Timeframe:</div>
<div class="t " style="left:454.40px;top:195.75px;font-size:12.7px;font-weight:400;color:#1b1e25;-webkit-text-stroke:0.25px #1b1e25">Last 30 Days</div>
<div class="t " style="left:616.00px;top:186.19px;font-size:9.7px;font-weight:400;color:#5a5d63;">Discount</div>
<div class="t " style="left:616.00px;top:202.99px;font-size:11px;font-weight:700;color:#1b1e25;">10%</div>
<div class="t " style="left:688.20px;top:186.19px;font-size:9.7px;font-weight:400;color:#5a5d63;">AOV</div>
<div class="t " style="left:688.20px;top:202.99px;font-size:11px;font-weight:700;color:#1b1e25;letter-spacing:0.6px">$64</div>
<div class="t " style="left:746.00px;top:186.19px;font-size:9.7px;font-weight:400;color:#5a5d63;">Description</div>
<div class="t " style="left:746.00px;top:202.90px;font-size:11.1px;font-weight:700;color:#1b1e25;">For this survey, we are trying to figure out what other places our customers will shop this</div>
<div class="t " style="left:746.00px;top:216.00px;font-size:11.1px;font-weight:700;color:#1b1e25;">coming Black Friday.</div>
<div style="position:absolute;left:373.30px;top:248.30px;width:421.00px;height:217.00px;background:#fff;border-radius:12px;box-shadow:0 0 0 0.6px #eef0f3"></div>
<div class="t " style="left:393.80px;top:264.15px;font-size:14px;font-weight:700;color:#16191f;">What is your gender?</div>
<div class="t " style="left:393.80px;top:285.62px;font-size:11.2px;font-weight:400;color:#8b8d92;">Responses: 100</div>
<div class="t " style="left:393.80px;top:315.69px;font-size:11px;font-weight:700;color:#16191f;">Female</div>
<div style="position:absolute;left:393.00px;top:334.00px;width:271.70px;height:8.00px;background:#162ba6;border-radius:4px"></div>
<div class="t " style="left:676.60px;top:330.99px;font-size:11px;font-weight:700;color:#3a3d43;">54%</div>
<div class="t " style="left:393.80px;top:368.69px;font-size:11px;font-weight:700;color:#16191f;">Male</div>
<div style="position:absolute;left:393.00px;top:384.00px;width:228.00px;height:8.00px;background:#162ba6;border-radius:4px"></div>
<div class="t " style="left:636.10px;top:383.19px;font-size:11px;font-weight:700;color:#3a3d43;">25%</div>
<div class="t " style="left:393.80px;top:421.49px;font-size:11px;font-weight:700;color:#16191f;">Other / Prefer not to say</div>
<div style="position:absolute;left:393.00px;top:437.00px;width:212.50px;height:8.00px;background:#162ba6;border-radius:4px"></div>
<div class="t " style="left:617.60px;top:435.29px;font-size:11px;font-weight:700;color:#3a3d43;">21%</div>
<div style="position:absolute;left:803.20px;top:248.30px;width:421.00px;height:217.00px;background:#fff;border-radius:12px;box-shadow:0 0 0 0.6px #eef0f3"></div>
<div class="t " style="left:823.70px;top:264.15px;font-size:14px;font-weight:700;color:#16191f;">How did you hear about us?</div>
<div class="t " style="left:823.70px;top:285.62px;font-size:11.2px;font-weight:400;color:#8b8d92;">Responses: 100</div>
<div class="t " style="left:823.70px;top:315.69px;font-size:11px;font-weight:700;color:#16191f;">Google Search</div>
<div style="position:absolute;left:822.90px;top:334.00px;width:271.70px;height:8.00px;background:#162ba6;border-radius:4px"></div>
<div class="t " style="left:1106.50px;top:330.99px;font-size:11px;font-weight:700;color:#3a3d43;">54%</div>
<div class="t " style="left:823.70px;top:368.69px;font-size:11px;font-weight:700;color:#16191f;">Facebook / Instagram</div>
<div style="position:absolute;left:822.90px;top:384.00px;width:228.00px;height:8.00px;background:#162ba6;border-radius:4px"></div>
<div class="t " style="left:1066.00px;top:383.19px;font-size:11px;font-weight:700;color:#3a3d43;">25%</div>
<div class="t " style="left:823.70px;top:421.49px;font-size:11px;font-weight:700;color:#16191f;">Referred by a friend</div>
<div style="position:absolute;left:822.90px;top:437.00px;width:212.50px;height:8.00px;background:#162ba6;border-radius:4px"></div>
<div class="t " style="left:1047.50px;top:435.29px;font-size:11px;font-weight:700;color:#3a3d43;">21%</div>
<div style="position:absolute;left:373.30px;top:482.00px;width:421.00px;height:217.00px;background:#fff;border-radius:12px;box-shadow:0 0 0 0.6px #eef0f3"></div>
<div class="t " style="left:393.80px;top:497.85px;font-size:14px;font-weight:700;color:#16191f;">What size car do you drive?</div>
<div class="t " style="left:393.80px;top:519.32px;font-size:11.2px;font-weight:400;color:#8b8d92;">Responses: 100</div>
<div class="t " style="left:393.80px;top:549.39px;font-size:11px;font-weight:700;color:#16191f;">Sedan</div>
<div style="position:absolute;left:393.00px;top:567.70px;width:271.70px;height:8.00px;background:#162ba6;border-radius:4px"></div>
<div class="t " style="left:676.60px;top:564.69px;font-size:11px;font-weight:700;color:#3a3d43;">54%</div>
<div class="t " style="left:393.80px;top:602.39px;font-size:11px;font-weight:700;color:#16191f;">Mid-size SUV</div>
<div style="position:absolute;left:393.00px;top:617.70px;width:228.00px;height:8.00px;background:#162ba6;border-radius:4px"></div>
<div class="t " style="left:636.10px;top:616.89px;font-size:11px;font-weight:700;color:#3a3d43;">25%</div>
<div class="t " style="left:393.80px;top:655.19px;font-size:11px;font-weight:700;color:#16191f;">Large SUV / Truck</div>
<div style="position:absolute;left:393.00px;top:670.70px;width:212.50px;height:8.00px;background:#162ba6;border-radius:4px"></div>
<div class="t " style="left:617.60px;top:668.99px;font-size:11px;font-weight:700;color:#3a3d43;">21%</div>
<div style="position:absolute;left:803.20px;top:482.00px;width:421.00px;height:217.00px;background:#fff;border-radius:12px;box-shadow:0 0 0 0.6px #eef0f3"></div>
<div class="t " style="left:823.70px;top:497.85px;font-size:14px;font-weight:700;color:#16191f;">How many pairs of shoes do you own?</div>
<div class="t " style="left:823.70px;top:519.32px;font-size:11.2px;font-weight:400;color:#8b8d92;">Responses: 100</div>
<div style="position:absolute;left:822.50px;top:637.80px;width:8.00px;height:25.90px;background:#162ba6;border-radius:4px"></div>
<div class="t c" style="left:796.50px;top:623.70px;width:60px;font-size:6.5px;color:#3d4045;-webkit-text-stroke:0.15px #3d4045">3 (8%)</div>
<div class="t c" style="left:806.30px;top:668.79px;width:40px;font-size:11px;color:#505359;-webkit-text-stroke:0.3px #505359">0</div>
<div style="position:absolute;left:858.30px;top:587.90px;width:8.00px;height:75.80px;background:#162ba6;border-radius:4px"></div>
<div class="t c" style="left:832.30px;top:574.00px;width:60px;font-size:6.5px;color:#3d4045;-webkit-text-stroke:0.15px #3d4045">6 (20%</div>
<div class="t c" style="left:842.00px;top:668.79px;width:40px;font-size:11px;color:#505359;-webkit-text-stroke:0.3px #505359">1</div>
<div style="position:absolute;left:894.10px;top:619.80px;width:8.00px;height:43.90px;background:#162ba6;border-radius:4px"></div>
<div class="t c" style="left:868.10px;top:606.50px;width:60px;font-size:6.5px;color:#3d4045;-webkit-text-stroke:0.15px #3d4045">4 (12%)</div>
<div class="t c" style="left:877.50px;top:668.79px;width:40px;font-size:11px;color:#505359;-webkit-text-stroke:0.3px #505359">2</div>
<div style="position:absolute;left:930.00px;top:650.30px;width:8.00px;height:13.40px;background:#162ba6;border-radius:4px"></div>
<div class="t c" style="left:904.00px;top:637.80px;width:60px;font-size:6.5px;color:#3d4045;-webkit-text-stroke:0.15px #3d4045">0 (0%)</div>
<div class="t c" style="left:913.50px;top:668.79px;width:40px;font-size:11px;color:#505359;-webkit-text-stroke:0.3px #505359">3</div>
<div style="position:absolute;left:965.90px;top:604.80px;width:8.00px;height:58.90px;background:#162ba6;border-radius:4px"></div>
<div class="t c" style="left:939.90px;top:591.00px;width:60px;font-size:6.5px;color:#3d4045;-webkit-text-stroke:0.15px #3d4045">5 (16%)</div>
<div class="t c" style="left:949.50px;top:668.79px;width:40px;font-size:11px;color:#505359;-webkit-text-stroke:0.3px #505359">4</div>
<div style="position:absolute;left:1001.70px;top:637.80px;width:8.00px;height:25.90px;background:#162ba6;border-radius:4px"></div>
<div class="t c" style="left:975.70px;top:623.70px;width:60px;font-size:6.5px;color:#3d4045;-webkit-text-stroke:0.15px #3d4045">3 (8%)</div>
<div class="t c" style="left:985.50px;top:668.79px;width:40px;font-size:11px;color:#505359;-webkit-text-stroke:0.3px #505359">5</div>
<div style="position:absolute;left:1037.50px;top:547.00px;width:8.00px;height:116.70px;background:#162ba6;border-radius:4px"></div>
<div class="t c" style="left:1011.50px;top:532.70px;width:60px;font-size:6.5px;color:#3d4045;-webkit-text-stroke:0.15px #3d4045">8 (28%)</div>
<div class="t c" style="left:1021.50px;top:668.79px;width:40px;font-size:11px;color:#505359;-webkit-text-stroke:0.3px #505359">6</div>
<div style="position:absolute;left:1073.30px;top:558.90px;width:8.00px;height:104.80px;background:#162ba6;border-radius:4px"></div>
<div class="t c" style="left:1047.30px;top:544.30px;width:60px;font-size:6.5px;color:#3d4045;-webkit-text-stroke:0.15px #3d4045">7 (24%)</div>
<div class="t c" style="left:1057.50px;top:668.79px;width:40px;font-size:11px;color:#505359;-webkit-text-stroke:0.3px #505359">7</div>
<div style="position:absolute;left:1109.10px;top:650.20px;width:8.00px;height:13.50px;background:#162ba6;border-radius:4px"></div>
<div class="t c" style="left:1083.10px;top:637.50px;width:60px;font-size:6.5px;color:#3d4045;-webkit-text-stroke:0.15px #3d4045">0 (0%)</div>
<div class="t c" style="left:1094.30px;top:668.79px;width:40px;font-size:11px;color:#505359;-webkit-text-stroke:0.3px #505359">8</div>
<div style="position:absolute;left:1144.90px;top:650.20px;width:8.00px;height:13.50px;background:#162ba6;border-radius:4px"></div>
<div class="t c" style="left:1118.90px;top:637.50px;width:60px;font-size:6.5px;color:#3d4045;-webkit-text-stroke:0.15px #3d4045">0 (0%)</div>
<div class="t c" style="left:1131.00px;top:668.79px;width:40px;font-size:11px;color:#505359;-webkit-text-stroke:0.3px #505359">9</div>
<div style="position:absolute;left:1180.70px;top:650.20px;width:8.00px;height:13.50px;background:#162ba6;border-radius:4px"></div>
<div class="t c" style="left:1154.70px;top:637.50px;width:60px;font-size:6.5px;color:#3d4045;-webkit-text-stroke:0.15px #3d4045">0 (0%)</div>
<div class="t c" style="left:1170.00px;top:668.79px;width:40px;font-size:11px;color:#505359;-webkit-text-stroke:0.3px #505359">10</div>
</body></html>
